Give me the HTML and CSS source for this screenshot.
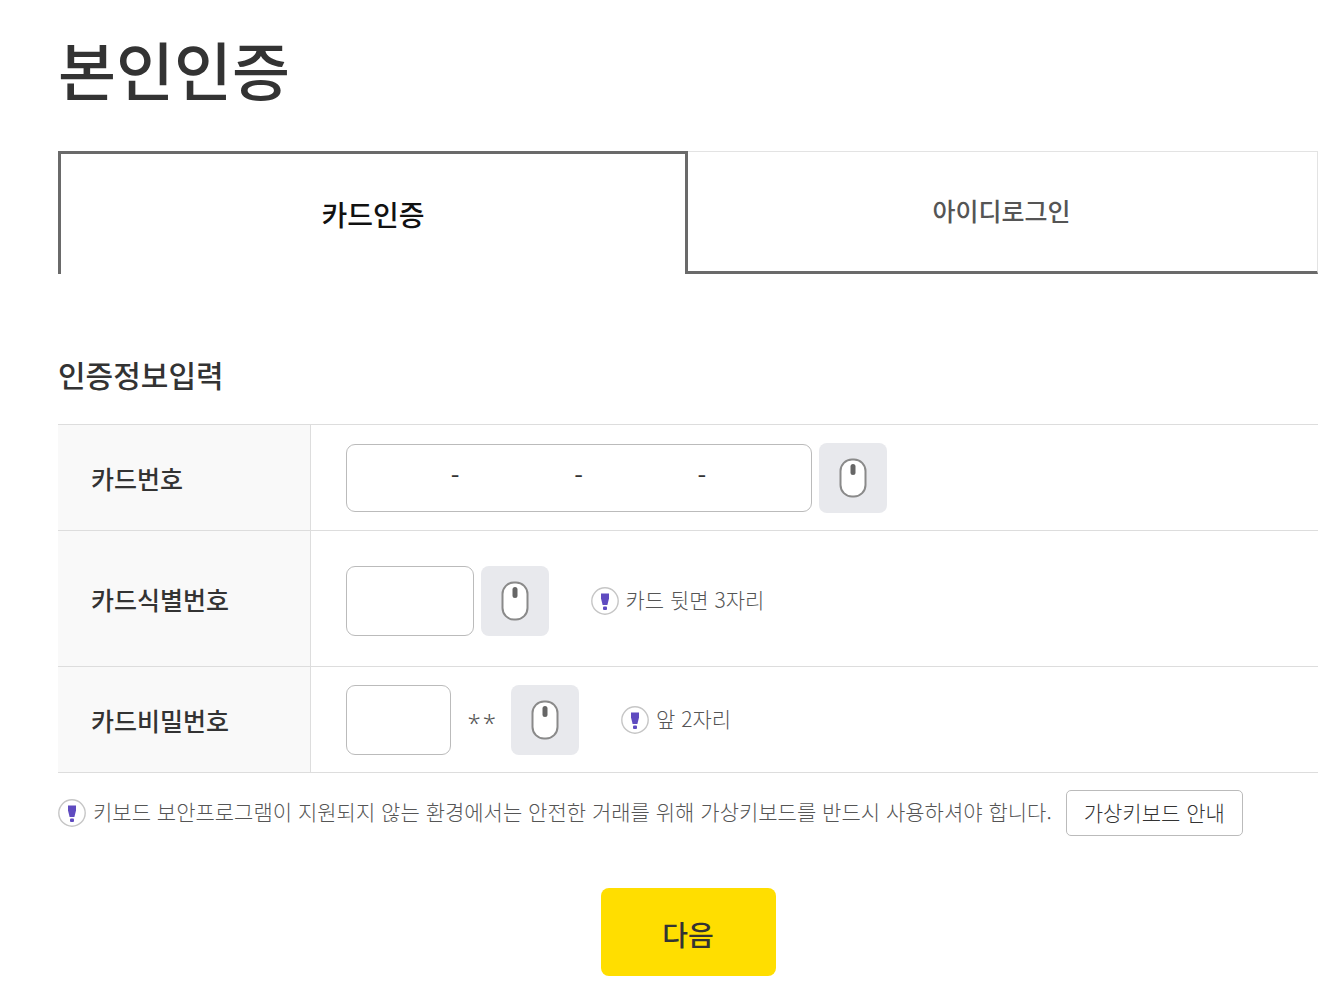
FILE: index.html
```html
<!DOCTYPE html>
<html lang="ko">
<head>
    <meta charset="UTF-8">
    <meta name="viewport" content="width=device-width, initial-scale=1.0">
    <title>본인인증</title>
    <link rel="stylesheet" href="styles.css">
</head>
<body>
    <!-- shared icons -->
    <svg class="sprite" aria-hidden="true">
        <symbol id="icon-mouse" viewBox="0 0 28 40">
            <rect x="1.5" y="1.5" width="25" height="37" rx="11.5" fill="#fff" stroke="#8a8a8a" stroke-width="2"/>
            <rect x="11.5" y="6" width="5" height="11" rx="2.5" fill="#666"/>
        </symbol>
        <symbol id="icon-notice" viewBox="0 0 28 28">
            <circle cx="14" cy="14" r="13.2" fill="#fff" stroke="#c6c6c6" stroke-width="1.4"/>
            <path d="M10 6.5h8v5l-1.6 6.5h-4.8L10 11.5z" fill="#5f4bc0"/>
            <rect x="12" y="19.5" width="4" height="3.5" rx="1" fill="#5f4bc0"/>
        </symbol>
    </svg>

    <main>
        <h1>본인인증</h1>

        <div class="tabs" role="tablist">
            <button class="tab active" type="button" role="tab" aria-selected="true">카드인증</button>
            <button class="tab" type="button" role="tab" aria-selected="false">아이디로그인</button>
        </div>

        <form>
            <h2>인증정보입력</h2>
            <table>
                <tbody>
                    <tr>
                        <th scope="row"><label for="card1">카드번호</label></th>
                        <td>
                            <div class="field">
                                <div class="card-number">
                                    <input id="card1" type="text" maxlength="4">
                                    <span>-</span>
                                    <input type="password" maxlength="4" aria-label="카드번호 둘째 자리">
                                    <span>-</span>
                                    <input type="password" maxlength="4" aria-label="카드번호 셋째 자리">
                                    <span>-</span>
                                    <input type="text" maxlength="4" aria-label="카드번호 넷째 자리">
                                </div>
                                <button class="mouse" type="button" aria-label="가상키보드"><svg><use href="#icon-mouse"/></svg></button>
                            </div>
                        </td>
                    </tr>
                    <tr class="tall">
                        <th scope="row"><label for="cvc">카드식별번호</label></th>
                        <td>
                            <div class="field">
                                <input class="box cvc" id="cvc" type="password" maxlength="3">
                                <button class="mouse" type="button" aria-label="가상키보드"><svg><use href="#icon-mouse"/></svg></button>
                                <p class="hint"><svg><use href="#icon-notice"/></svg><span>카드 뒷면 3자리</span></p>
                            </div>
                        </td>
                    </tr>
                    <tr>
                        <th scope="row"><label for="pin">카드비밀번호</label></th>
                        <td>
                            <div class="field">
                                <input class="box pin" id="pin" type="password" maxlength="2">
                                <span class="stars"><span>*</span><span>*</span></span>
                                <button class="mouse" type="button" aria-label="가상키보드"><svg><use href="#icon-mouse"/></svg></button>
                                <p class="hint"><svg><use href="#icon-notice"/></svg><span>앞 2자리</span></p>
                            </div>
                        </td>
                    </tr>
                </tbody>
            </table>

            <div class="notice">
                <p class="hint"><svg><use href="#icon-notice"/></svg><span>키보드 보안프로그램이 지원되지 않는 환경에서는 안전한 거래를 위해 가상키보드를 반드시 사용하셔야 합니다.</span></p>
                <button class="guide" type="button">가상키보드 안내</button>
            </div>

            <button class="next" type="submit">다음</button>
        </form>
    </main>
</body>
</html>
```
FILE: styles.css
```css
* {
    box-sizing: border-box;
}

body {
    margin: 0;
    background: #fff;
    color: #333;
    font-family: "Noto Sans CJK KR", "Noto Sans", sans-serif;
    font-size: 21px;
    font-weight: 300;
}

button, input {
    font: inherit;
    color: inherit;
}

button {
    cursor: pointer;
}

.sprite {
    display: none;
}

main {
    padding: 22px 15px 24px 58px;
}

h1 {
    margin: 0;
    font-size: 63px;
    font-weight: 500;
    line-height: 92px;
}

/* tabs */
.tabs {
    display: grid;
    grid-template-columns: 1fr 1fr;
    margin-top: 37px;
}

.tab {
    height: 123px;
    padding: 0 2px 4px 0;
    background: #fff;
    border: 1px solid #e3e3e3;
    border-left: 0;
    border-bottom: 3px solid #6a6a6a;
    color: #555;
    font-size: 25px;
    font-weight: 500;

    &.active {
        padding: 0;
        border: 3px solid #6a6a6a;
        border-bottom: 0;
        color: #111;
        font-size: 28px;
    }
}

h2 {
    margin: 78px 0 28px;
    font-size: 30px;
    font-weight: 500;
    line-height: 44px;
}

/* card form */
table {
    width: 100%;
    border-collapse: collapse;
}

tr {
    height: 106px;
    border-top: 1px solid #ddd;
    border-bottom: 1px solid #ddd;
}

.tall {
    height: 136px;

    td {
        padding-top: 4px;
    }
}

th {
    width: 252px;
    padding: 0 0 0 33px;
    background: #f9f9f9;
    border-right: 1px solid #ddd;
    font-size: 25px;
    font-weight: 500;
    text-align: left;
}

td {
    padding: 0 0 0 35px;
}

.field {
    display: flex;
    align-items: center;
    gap: 7px;
}

.box, .card-number {
    height: 70px;
    background: #fff;
    border: 1px solid #bbb;
    border-radius: 9px;
}

.box {
    padding: 0 16px;
}

.card-number {
    display: grid;
    grid-template-columns: 10fr auto 11fr auto 11fr auto 10fr;
    align-items: center;
    width: 466px;
    height: 68px;

    input {
        width: 100%;
        min-width: 0;
        height: 60px;
        padding: 0 8px;
        border: 0;
        background: none;
        text-align: center;
    }

    span {
        padding-bottom: 6px;
        font-size: 25px;
        font-weight: 400;
    }
}

.cvc {
    width: 128px;
}

.pin {
    width: 105px;
}

.stars {
    display: flex;
    gap: 2px;
    padding: 6px 8px 0 10px;
    color: #555;
    font-family: "Noto Sans", sans-serif;
    font-size: 24px;
}

.mouse {
    display: flex;
    align-items: center;
    justify-content: center;
    width: 68px;
    height: 70px;
    padding: 0;
    background: #e8e9ed;
    border: 0;
    border-radius: 8px;

    svg {
        width: 28px;
        height: 40px;
    }
}

.hint {
    display: flex;
    align-items: center;
    gap: 7px;
    margin: 0;
    color: #555;

    svg {
        flex: none;
        width: 28px;
        height: 28px;
    }

    span {
        padding-bottom: 4px;
    }
}

.field .hint {
    margin-left: 35px;
}

.notice {
    display: flex;
    align-items: center;
    gap: 14px;
    margin-top: 17px;
}

.guide {
    height: 46px;
    padding: 0 17px 2px;
    background: #fff;
    border: 1px solid #bbb;
    border-radius: 5px;
    white-space: nowrap;
}

.next {
    display: block;
    width: 175px;
    height: 88px;
    margin: 52px auto 0;
    padding: 4px 0 0;
    background: #ffde00;
    border: 0;
    border-radius: 8px;
    font-size: 28px;
    font-weight: 500;
}
```
